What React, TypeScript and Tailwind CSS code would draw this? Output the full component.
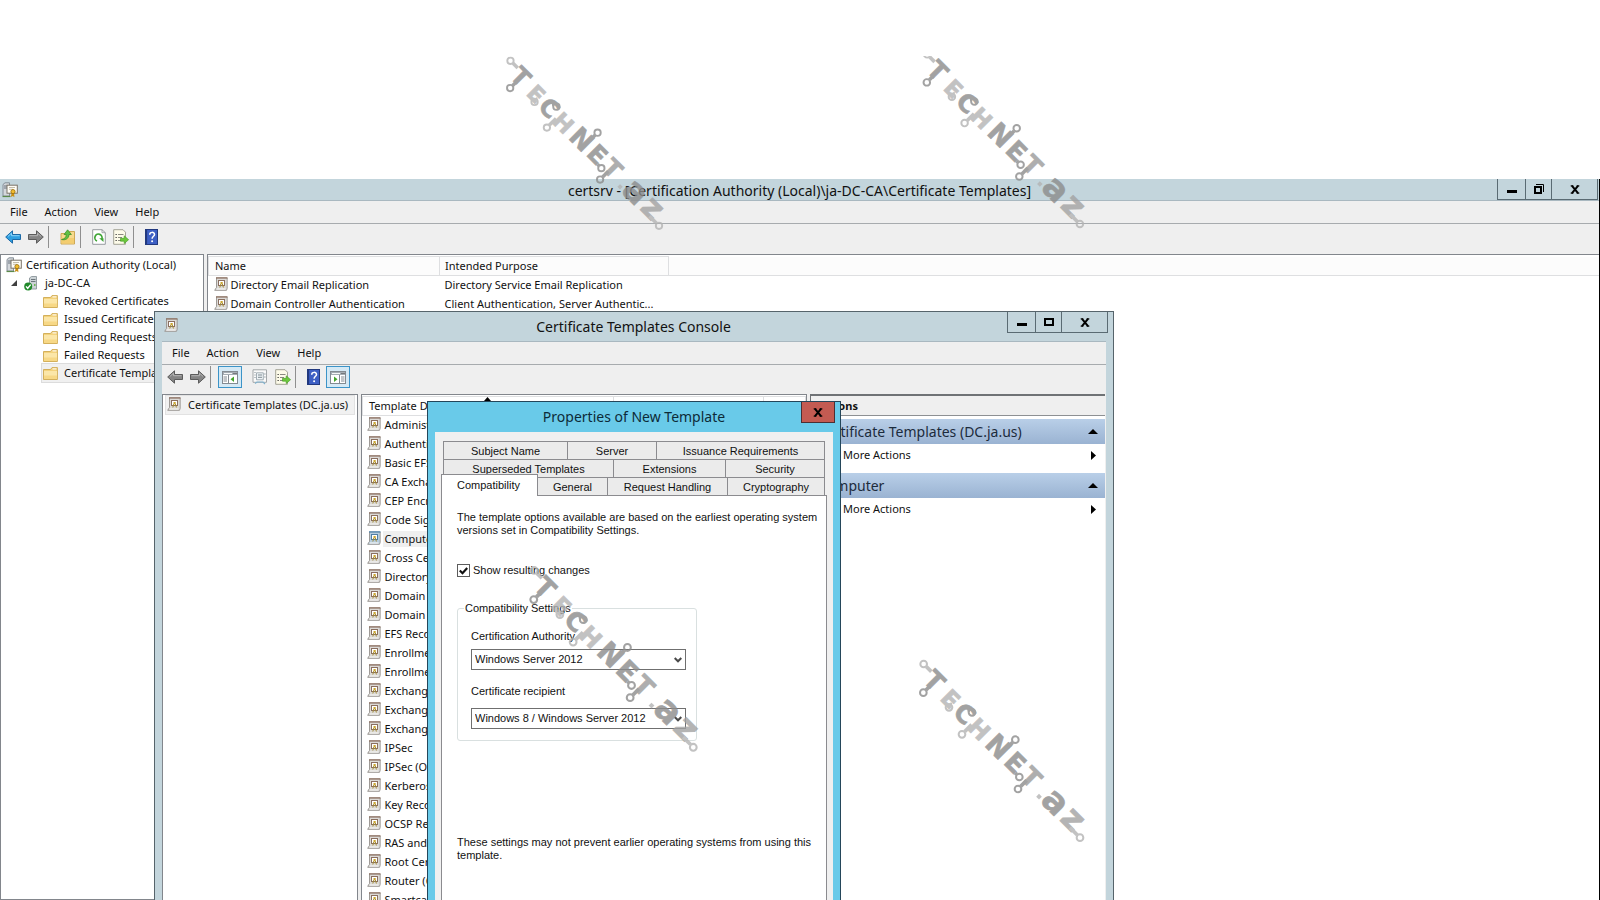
import type { ReactNode } from "react";

const outerRows = [
  ["Directory Email Replication", "Directory Service Email Replication"],
  ["Domain Controller Authentication", "Client Authentication, Server Authentic..."],
];

const folders = [
  "Revoked Certificates",
  "Issued Certificates",
  "Pending Requests",
  "Failed Requests",
  "Certificate Templates",
];

const templates = [
  "Administrator",
  "Authenticated Session",
  "Basic EFS",
  "CA Exchange",
  "CEP Encryption",
  "Code Signing",
  "Computer",
  "Cross Certification Authority",
  "Directory Email Replication",
  "Domain Controller",
  "Domain Controller Authentication",
  "EFS Recovery Agent",
  "Enrollment Agent",
  "Enrollment Agent (Computer)",
  "Exchange Enrollment Agent",
  "Exchange Signature Only",
  "Exchange User",
  "IPSec",
  "IPSec (Offline request)",
  "Kerberos Authentication",
  "Key Recovery Agent",
  "OCSP Response Signing",
  "RAS and IAS Server",
  "Root Certification Authority",
  "Router (Offline request)",
  "Smartcard Logon",
];

/* ---------- icons ---------- */

function CertIcon({ selected = false }: { selected?: boolean }) {
  const frame = selected ? "#4f7fa6" : "#8a6f60";
  return (
    <svg className="mb-[2px] h-[14px] w-[14px] shrink-0" viewBox="0 0 14 14" aria-hidden="true">
      <path d="M2 1h11v10.500l-.5 2H.5L2 10.500z" fill={selected ? "#b5cde0" : "#dcdad7"} />
      <path d="M2.500 1v9.500L.7 13.300h11.800l.700-2V1" fill="none" stroke="#96938f" strokeWidth="0.900" />
      <path d="M2 .900h11.500" stroke={frame} strokeWidth="1.400" />
      <rect x="4.500" y="3.500" width="6" height="5" fill="#fff" stroke={frame} strokeWidth="1" />
      <rect x="6.500" y="5" width="2.200" height="2.200" fill="#c9a52e" />
      <path d="M6.800 7l-1 3.500M8.400 7l1 3.500" stroke="#a28a35" strokeWidth="1" />
      <path d="M2.500 12h9" stroke="#f4f3f1" strokeWidth="1.200" />
    </svg>
  );
}

function AuthorityIcon() {
  return (
    <svg className="h-4 w-4 shrink-0" viewBox="0 0 16 16" aria-hidden="true">
      <path d="M1 2.500L3 .8h4.500V14H1z" fill="#d4d8dc" stroke="#7d8790" strokeWidth="0.900" />
      <path d="M2 4h4M2 6h3" stroke="#5f6a74" strokeWidth="0.900" />
      <path d="M.5 14.500h8" stroke="#5b8a4a" strokeWidth="1.200" />
      <rect x="5" y="3.200" width="10.300" height="8" fill="#fffdf6" stroke="#7b7468" strokeWidth="1" />
      <path d="M7 5.500h6M7 7.300h4" stroke="#b5ad9a" strokeWidth="0.800" />
      <path d="M9.800 10.500l-1 4.500 2-1 1.600 1.300-.4-4.800z" fill="#c98f12" />
      <circle cx="11" cy="9.600" r="2.100" fill="#f0bc2f" stroke="#9a6f0c" strokeWidth="0.800" />
    </svg>
  );
}

function ServerOkIcon() {
  return (
    <svg className="h-[15px] w-[14px] shrink-0" viewBox="0 0 14 15" aria-hidden="true">
      <path d="M5.500 2L7.500.5h5V13h-7z" fill="#ccd3d6" stroke="#8b959b" strokeWidth="0.900" />
      <path d="M7 3.500h4.500M7 5.500h4.500" stroke="#6c767c" strokeWidth="1" />
      <rect x="10" y="8" width="1.500" height="2" fill="#6fb45a" />
      <circle cx="4.200" cy="10.500" r="4" fill="#218a2b" />
      <path d="M2 10.400l1.700 1.900 3-3.700" fill="none" stroke="#fff" strokeWidth="1.400" />
    </svg>
  );
}

function FolderIcon() {
  return (
    <svg className="h-[13px] w-[15px] shrink-0" viewBox="0 0 15 13" aria-hidden="true">
      <path d="M.5 2.500h7L9 .6h5.400v11.900H.5z" fill="#f3d27c" stroke="#cfa950" strokeWidth="0.900" />
      <path d="M9.500 1.900h4" stroke="#fff" strokeWidth="1" />
      <path d="M1 4h13v8H1z" fill="#fbe6a8" />
      <path d="M1 8.500h13V12H1z" fill="#f7d886" />
    </svg>
  );
}

function ArrowIcon({ blue = false, back = false }: { blue?: boolean; back?: boolean }) {
  return (
    <svg className="h-[14px] w-4" viewBox="0 0 16 14" aria-hidden="true">
      <path
        d={back ? "M.7 7L7.500.8v3.700h8v5h-8v3.700z" : "M15.300 7L8.500.8v3.700h-8v5h8v3.700z"}
        fill={blue ? "#2f9fe0" : "#858585"}
        stroke={blue ? "#1c69a6" : "#5c5c5c"}
        strokeWidth="1"
      />
      <path
        d={back ? "M3 6.400l3.500-3.200v2.500h8" : "M1.500 5.700h8V3.200L13 6.400"}
        fill="none"
        stroke={blue ? "#8bd3f8" : "#b5b5b5"}
        strokeWidth="1"
      />
    </svg>
  );
}

function UpFolderIcon() {
  return (
    <svg className="h-4 w-4" viewBox="0 0 16 16" aria-hidden="true">
      <path d="M1 4.500h7l1.500-2h5V15H1z" fill="#f7da8d" stroke="#c9a24a" strokeWidth="0.900" />
      <path d="M1.500 9H14v5.500H1.500z" fill="#f3cd70" />
      <path d="M1.500 10.500c3.500-.5 4.700-2.500 4.700-5H4L7.600.8l3.800 4.700H9c0 4-3.500 6-7.500 5z" fill="#5fc043" stroke="#348a22" strokeWidth="0.700" />
    </svg>
  );
}

function RefreshIcon() {
  return (
    <svg className="h-4 w-[14px]" viewBox="0 0 14 16" aria-hidden="true">
      <path d="M.7.7H10l3.300 3v11.600H.7z" fill="#fff" stroke="#8d9296" strokeWidth="0.900" />
      <path d="M10 .7v3h3.300" fill="none" stroke="#8d9296" strokeWidth="0.800" />
      <path d="M5 12A3.600 3.600 0 1 1 9.800 10" fill="none" stroke="#3fa535" strokeWidth="1.700" />
      <path d="M7.200 9.300h4.300V13z" fill="#3fa535" />
    </svg>
  );
}

function ExportIcon() {
  return (
    <svg className="h-4 w-4" viewBox="0 0 16 16" aria-hidden="true">
      <path d="M.7.7H10l2.500 2.500v12.100H.7z" fill="#fdfbe9" stroke="#9a9a8c" strokeWidth="0.900" />
      <path d="M2.500 5.500h1.300M2.500 8.500h1.300M2.500 11.500h1.300" stroke="#444" strokeWidth="1.200" />
      <path d="M5 5.500h5.500M5 8.500h4M5 11.500h3.500" stroke="#8a8a80" strokeWidth="1" />
      <path d="M7.500 9.300h3.700V6.800l4.400 3.900-4.400 3.900v-2.400H7.500z" fill="#6cc83d" stroke="#3f9a1f" strokeWidth="0.600" />
    </svg>
  );
}

function HelpIcon() {
  return (
    <svg className="h-4 w-[13px]" viewBox="0 0 13 16" aria-hidden="true">
      <rect x="0.500" y="0.500" width="12" height="15" fill="#3d5fc4" stroke="#22397f" strokeWidth="1" />
      <path d="M1.500 1v14" stroke="#22397f" strokeWidth="1.200" />
      <path d="M4.700 5.700C4.700 2.600 9.500 2.700 9.500 5.400c0 1.900-2.400 2-2.400 4.400" fill="none" stroke="#fff" strokeWidth="1.500" />
      <circle cx="7.100" cy="12.200" r="1" fill="#fff" />
    </svg>
  );
}

function PropertiesIcon() {
  return (
    <svg className="h-4 w-4" viewBox="0 0 16 16" aria-hidden="true">
      <path d="M1 .8h13.500v12.500H1z" fill="#fafafa" stroke="#9b9fa2" strokeWidth="0.900" />
      <path d="M4.500 3.800h6.800v7H4.500z" fill="#eef3f6" stroke="#9aa6ad" strokeWidth="0.900" />
      <path d="M2.500 3.500h1M2.500 6h1M2.500 8.500h1M6 6h4M6 8.300h4M12.300 5h1.200M12.300 8h1.200" stroke="#7d8a92" strokeWidth="1" />
      <path d="M3 14.500L5 13h6l2 2" fill="none" stroke="#7fb2cf" strokeWidth="1.100" />
    </svg>
  );
}

function PaneIcon({ right = false }: { right?: boolean }) {
  return (
    <svg className="h-[13px] w-4" viewBox="0 0 16 13" aria-hidden="true">
      <rect x="0.500" y="0.500" width="15" height="12" fill="#fff" stroke="#838b92" strokeWidth="1" />
      <path d="M1 1h14v3H1z" fill="#a5adb4" />
      <path d="M2 2.500h8" stroke="#fff" strokeWidth="0.900" />
      <path d="M11.500 2.500h1M13.500 2.500h1" stroke="#444" strokeWidth="1" />
      {right ? (
        <>
          <path d="M9.500 4v8.500" stroke="#838b92" strokeWidth="1" />
          <path d="M11 6h3.500M11 8h3.500M11 10h3.500" stroke="#838b92" strokeWidth="1" />
          <path d="M4 5.500l3.500 2.800L4 11z" fill="#43a52c" />
        </>
      ) : (
        <>
          <path d="M6.500 4v8.500" stroke="#838b92" strokeWidth="1" />
          <path d="M1.500 6H5M1.500 8H5M1.500 10H5" stroke="#838b92" strokeWidth="1" />
          <path d="M12 5.500L8.500 8.300 12 11z" fill="#43a52c" />
        </>
      )}
    </svg>
  );
}

function CloseGlyph() {
  return (
    <svg className="h-[9px] w-[10px]" viewBox="0 0 10 9" aria-hidden="true">
      <path d="M2 .8l6 7.400M8 .8L2 8.200" stroke="#000" strokeWidth="2" />
      <path d="M.7.800h2.600M6.700.800h2.600M.7 8.200h2.600M6.700 8.200h2.600" stroke="#000" strokeWidth="1.300" />
    </svg>
  );
}

function MinimizeGlyph() {
  return (
    <svg className="h-[9px] w-[10px]" viewBox="0 0 10 9" aria-hidden="true">
      <rect y="5" width="10" height="3" />
    </svg>
  );
}

function MaximizeGlyph({ restore = false }: { restore?: boolean }) {
  return (
    <svg className="h-[10px] w-[10px]" viewBox="0 0 10 10" aria-hidden="true">
      {restore ? (
        <>
          <rect x="1" y="3" width="6" height="6" fill="none" stroke="#000" strokeWidth="2" />
          <path d="M2 .5h7.500V8" fill="none" stroke="#000" strokeWidth="1" />
        </>
      ) : (
        <rect x="1" y="2" width="8" height="6" fill="none" stroke="#000" strokeWidth="2" />
      )}
    </svg>
  );
}

/* ---------- shared window parts ---------- */

function WindowButtons({ restore = false }: { restore?: boolean }) {
  const base = "flex items-center justify-center border-r border-[#5a6b73]";
  return (
    <div className="flex h-[21px] border-b border-l border-[#5a6b73]">
      <button type="button" aria-label="Minimize" className={`${base} w-7`}>
        <MinimizeGlyph />
      </button>
      <button type="button" aria-label={restore ? "Restore" : "Maximize"} className={`${base} w-[26px]`}>
        <MaximizeGlyph restore={restore} />
      </button>
      <button type="button" aria-label="Close" className={`${base} w-[46px]`}>
        <CloseGlyph />
      </button>
    </div>
  );
}

function MenuBar() {
  return (
    <nav className="flex h-[23px] shrink-0 items-center gap-[17px] border-b border-[#a7abae] bg-[#efefef] px-[10px]">
      {["File", "Action", "View", "Help"].map((item) => (
        <button type="button" key={item}>
          {item}
        </button>
      ))}
    </nav>
  );
}

function ToolButton({ label, children, active = false }: { label: string; children: ReactNode; active?: boolean }) {
  return (
    <button
      type="button"
      aria-label={label}
      className={
        active
          ? "flex h-[22px] w-6 items-center justify-center border border-[#3c94c8] bg-[#d5e9f5]"
          : "flex h-[22px] items-center justify-center"
      }
    >
      {children}
    </button>
  );
}

function Divider() {
  return <span className="h-[22px] w-px bg-[#8f8f8f]" />;
}

/* ---------- watermark ---------- */

const marks: [string, number, number, number, string][] = [
  ["T", 104, 122, 76, "#8c8c8c"],
  ["E", 152, 177, 70, "#b4b4b4"],
  ["C", 194, 221, 76, "#8c8c8c"],
  ["H", 238, 268, 72, "#b4b4b4"],
  ["N", 296, 319, 82, "#8c8c8c"],
  ["E", 346, 368, 78, "#8c8c8c"],
  ["T", 394, 412, 76, "#9a9a9a"],
  ["a", 463, 489, 104, "#8c8c8c"],
  ["z", 517, 540, 100, "#a2a2a2"],
];

const nodes: [number, number, number, number, string][] = [
  [71, 72, 94, 95, "#b4b4b4"],
  [70, 158, 90, 138, "#8c8c8c"],
  [147, 202, 150, 192, "#b4b4b4"],
  [216, 217, 202, 210, "#8c8c8c"],
  [186, 283, 215, 254, "#b4b4b4"],
  [346, 299, 322, 323, "#8c8c8c"],
  [358, 411, 346, 399, "#8c8c8c"],
  [354, 447, 380, 421, "#8c8c8c"],
  [540, 593, 510, 563, "#b4b4b4"],
];

function Watermark({ place, viewBox = "0 0 660 660" }: { place: string; viewBox?: string }) {
  return (
    <svg className={`pointer-events-none absolute opacity-80 ${place}`} viewBox={viewBox} aria-hidden="true">
      {marks.map(([ch, x, y, size, fill]) => (
        <text
          key={`${ch}${x}`}
          transform={`translate(${x} ${y}) rotate(45)`}
          y={ch === "a" || ch === "z" ? size * 0.28 : size * 0.36}
          textAnchor="middle"
          fontSize={size}
          fill={fill}
          stroke={fill}
          strokeWidth="2"
          className="font-['DejaVu_Sans',sans-serif] font-bold"
        >
          {ch}
        </text>
      ))}
      <rect x="411" y="464" width="12" height="12" transform="rotate(45 417 470)" fill="#b4b4b4" />
      {nodes.map(([x, y, tx, ty, stroke]) => (
        <g key={`${x}-${y}`} stroke={stroke} fill="none">
          <path d={`M${x + Math.sign(tx - x) * 8} ${y + Math.sign(ty - y) * 8}L${tx} ${ty}`} strokeWidth="11" />
          <circle cx={x} cy={y} r="10" strokeWidth="6" />
        </g>
      ))}
    </svg>
  );
}

/* ---------- windows ---------- */

function CertAuthorityWindow() {
  return (
    <main className="flex min-h-0 flex-1 flex-col border-r border-black bg-[#efefef]">
      <header className="flex h-[22px] shrink-0 items-start border-b border-[#a9b8c0] bg-[#c3d5dc] pl-[2px] pr-px">
        <div className="flex h-[22px] w-[100px] items-center">
          <AuthorityIcon />
        </div>
        <h1 className="flex-1 truncate text-center text-[14px] leading-6">
          certsrv - [Certification Authority (Local)\ja-DC-CA\Certificate Templates]
        </h1>
        <WindowButtons restore />
      </header>
      <MenuBar />
      <div className="flex h-[30px] shrink-0 items-start gap-1 pl-[5px] pt-[2px]">
        <div className="flex gap-[7px]">
          <ToolButton label="Back"><ArrowIcon blue back /></ToolButton>
          <ToolButton label="Forward"><ArrowIcon /></ToolButton>
        </div>
        <Divider />
        <div className="flex pl-[7px]"><ToolButton label="Up one level"><UpFolderIcon /></ToolButton></div>
        <Divider />
        <div className="flex gap-[7px] pl-[7px]">
          <ToolButton label="Refresh"><RefreshIcon /></ToolButton>
          <ToolButton label="Export list"><ExportIcon /></ToolButton>
        </div>
        <Divider />
        <div className="flex pl-[7px]"><ToolButton label="Help"><HelpIcon /></ToolButton></div>
      </div>
      <div className="flex min-h-0 flex-1 gap-[3px]">
        <section className="w-[204px] shrink-0 overflow-hidden border border-[#82868c] bg-white pt-px">
          <div className="flex h-[18px] items-center gap-1 whitespace-nowrap pl-[5px]">
            <AuthorityIcon />
            Certification Authority (Local)
          </div>
          <div className="flex h-[18px] items-center whitespace-nowrap pl-[10px]">
            <svg className="mr-[7px] h-[6px] w-[6px]" viewBox="0 0 6 6" aria-hidden="true">
              <path d="M6 0v6H0z" fill="#404040" />
            </svg>
            <ServerOkIcon />
            <span className="pl-[7px]">ja-DC-CA</span>
          </div>
          <ul className="pl-[41px]">
            {folders.map((f, i) => (
              <li
                key={f}
                className={
                  i === folders.length - 1
                    ? "flex h-[18px] items-center gap-[6px] whitespace-nowrap bg-[#f0f0f0] pl-px outline outline-[#dcdcdc]"
                    : "flex h-[18px] items-center gap-[6px] whitespace-nowrap pl-px"
                }
              >
                <FolderIcon />
                {f}
              </li>
            ))}
          </ul>
        </section>
        <section className="flex-1 border-l border-t border-[#82868c] bg-white pt-px">
          <table className="w-full table-fixed border-collapse text-left">
            <colgroup>
              <col className="w-[231px]" />
              <col className="w-[229px]" />
              <col />
            </colgroup>
            <thead className="bg-[#fcfcfc]">
              <tr className="h-[19px]">
                <th className="border border-[#dedfe1] py-0 pl-[6px] font-normal">Name</th>
                <th className="border border-[#dedfe1] py-0 pl-[5px] font-normal">Intended Purpose</th>
                <th className="border-b border-[#dedfe1] p-0" aria-label="Empty" />
              </tr>
            </thead>
            <tbody>
              {outerRows.map(([name, purpose]) => (
                <tr key={name} className="h-[19px]">
                  <td className="py-0 pl-[5px]">
                    <span className="flex items-center gap-[3px] whitespace-nowrap"><CertIcon />{name}</span>
                  </td>
                  <td className="whitespace-nowrap py-0 pl-[5px]">{purpose}</td>
                  <td />
                </tr>
              ))}
            </tbody>
          </table>
        </section>
      </div>
    </main>
  );
}

function ActionGroup({ title }: { title: string }) {
  return (
    <div className="pb-[11px]">
      <div className="flex h-[25px] items-center justify-between bg-linear-to-b from-[#b9cfe8] to-[#9ab3d2] pl-[7px] pr-[7px] text-[14px] text-[#1c2b3c]">
        {title}
        <svg className="h-[5px] w-[10px]" viewBox="0 0 10 5" aria-hidden="true">
          <path d="M0 5l5-5 5 5z" fill="#000" />
        </svg>
      </div>
      <button type="button" className="flex h-[18px] w-full items-center justify-between pl-8 pr-[9px] pt-1">
        More Actions
        <svg className="h-[9px] w-[5px]" viewBox="0 0 5 9" aria-hidden="true">
          <path d="M0 0l5 4.500L0 9z" fill="#000" />
        </svg>
      </button>
    </div>
  );
}

function TemplatesConsole() {
  return (
    <section className="absolute -bottom-px left-[154px] top-[311px] flex w-[960px] flex-col border border-[#56646b] bg-[#c3d5dc]">
      <header className="flex h-[29px] shrink-0 items-start pl-[9px] pr-[5px]">
        <div className="flex h-[28px] w-24 items-center"><CertIcon /></div>
        <h2 className="flex-1 text-center text-[14px] leading-[30px]">Certificate Templates Console</h2>
        <WindowButtons />
      </header>
      <div className="mx-[7px] flex min-h-0 flex-1 flex-col border-t border-[#a9b8c0] bg-[#efefef]">
        <MenuBar />
        <div className="flex h-[29px] shrink-0 items-start gap-1 pl-[5px] pt-px">
          <div className="flex gap-[7px]">
            <ToolButton label="Back"><ArrowIcon back /></ToolButton>
            <ToolButton label="Forward"><ArrowIcon /></ToolButton>
          </div>
          <Divider />
          <div className="flex pl-[3px]">
            <ToolButton label="Show console tree" active><PaneIcon /></ToolButton>
          </div>
          <div className="flex gap-[7px] pl-[6px]">
            <ToolButton label="Properties"><PropertiesIcon /></ToolButton>
            <ToolButton label="Export list"><ExportIcon /></ToolButton>
          </div>
          <Divider />
          <div className="flex gap-[6px] pl-[7px]">
            <ToolButton label="Help"><HelpIcon /></ToolButton>
            <ToolButton label="Show action pane" active><PaneIcon right /></ToolButton>
          </div>
        </div>
        <div className="flex min-h-0 flex-1 gap-[3px]">
          <div className="w-[196px] shrink-0 border border-b-0 border-[#82868c] bg-white px-[3px] pt-px">
            <div className="flex h-[18px] items-center gap-[7px] whitespace-nowrap bg-[#f1f1f1] pl-px outline outline-[#e2e2e2]">
              <CertIcon />
              Certificate Templates (DC.ja.us)
            </div>
          </div>
          <div className="w-[446px] shrink-0 overflow-hidden border border-b-0 border-[#82868c] bg-white pt-px">
            <table className="w-full table-fixed border-collapse text-left">
              <colgroup>
                <col className="w-[251px]" />
                <col className="w-[150px]" />
                <col />
              </colgroup>
              <thead>
                <tr className="h-[19px]">
                  <th className="relative border border-[#dedfe1] py-0 pl-[6px] font-normal">
                    Template Display Name
                    <svg className="absolute left-[121px] top-0 h-1 w-[7px]" viewBox="0 0 7 4" aria-hidden="true">
                      <path d="M0 4l3.500-4L7 4z" />
                    </svg>
                  </th>
                  <th className="border border-[#dedfe1]" aria-label="Schema version" />
                  <th className="border border-[#dedfe1]" aria-label="Version" />
                </tr>
              </thead>
              <tbody>
                {templates.map((t) => (
                  <tr key={t} className="h-[19px]">
                    <td className="py-0 pl-[4px]">
                      <span className="flex items-center whitespace-nowrap">
                        <CertIcon selected={t === "Computer"} />
                        <span className={t === "Computer" ? "ml-[2px] flex-1 bg-[#efefef] pl-[2px]" : "pl-1"}>{t}</span>
                      </span>
                    </td>
                    <td />
                    <td />
                  </tr>
                ))}
              </tbody>
            </table>
          </div>
          <aside className="mr-px flex-1 border-l border-t-2 border-[#6f7275] bg-white">
            <h3 className="mb-[3px] h-[20px] border-b border-[#8d9093] bg-[#efefef] pl-[6px] text-[11px] font-bold leading-[20px]">Actions</h3>
            <ActionGroup title="Certificate Templates (DC.ja.us)" />
            <ActionGroup title="Computer" />
          </aside>
        </div>
      </div>
    </section>
  );
}

function Tab({ label, size }: { label: string; size: string }) {
  return (
    <button type="button" role="tab" className={`h-[18px] border border-b-0 border-r-0 border-[#8b8b8f] bg-[#ebebeb] ${size}`}>
      {label}
    </button>
  );
}

function Combo({ id, label, value, gap }: { id: string; label: string; value: string; gap: string }) {
  return (
    <div className={`flex w-[215px] flex-col ${gap}`}>
      <label htmlFor={id} className="leading-[13px]">{label}</label>
      <div className="relative">
        <select id={id} defaultValue={value} className="block h-[21px] w-full appearance-none rounded-none border border-[#6f6f6f] bg-white pl-[3px] leading-[19px]">
          <option>{value}</option>
        </select>
        <svg className="pointer-events-none absolute right-[4px] top-[8px] h-[6px] w-2" viewBox="0 0 8 6" aria-hidden="true">
          <path d="M.7 1L4 4.300 7.300 1" fill="none" stroke="#4a4a4a" strokeWidth="2" />
        </svg>
      </div>
    </div>
  );
}

function PropertiesDialog() {
  return (
    <section
      role="dialog"
      aria-label="Properties of New Template"
      className="absolute -bottom-px left-[427px] top-[401px] flex w-[414px] flex-col border border-[#24465a] bg-[#69cae9] px-[7px] font-['Liberation_Sans',Arial,sans-serif] text-[11px]"
    >
      <header className="flex h-[30px] shrink-0 items-start justify-center">
        <h2 className="font-['Noto_Sans',sans-serif] text-[14px] leading-[30px] text-[#0d2b38]">Properties of New Template</h2>
        <button type="button" aria-label="Close" className="absolute right-[5px] top-0 flex h-[21px] w-[34px] items-center justify-center border border-t-0 border-[#4c2f33] bg-[#c35b52]">
          <CloseGlyph />
        </button>
      </header>
      <div className="flex min-h-0 flex-1 flex-col bg-[#f0f0f0] px-[6px] pt-[9px]">
        <div role="tablist" className="relative px-[2px]">
          <div className="flex border-r border-[#8b8b8f]">
            <Tab label="Subject Name" size="w-[124px]" />
            <Tab label="Server" size="w-[89px]" />
            <Tab label="Issuance Requirements" size="flex-1" />
          </div>
          <div className="flex border-r border-[#8b8b8f]">
            <Tab label="Superseded Templates" size="w-[170px]" />
            <Tab label="Extensions" size="w-[112px]" />
            <Tab label="Security" size="flex-1" />
          </div>
          <div className="flex border-r border-[#8b8b8f] pl-[94px]">
            <Tab label="General" size="w-[70px]" />
            <Tab label="Request Handling" size="w-[120px]" />
            <Tab label="Cryptography" size="flex-1" />
          </div>
          <button
            type="button"
            role="tab"
            aria-selected="true"
            className="absolute -bottom-px left-0 h-[22px] w-[97px] border border-b-0 border-[#8b8b8f] bg-white pb-[2px] pr-[2px]"
          >
            Compatibility
          </button>
        </div>
        <div role="tabpanel" className="flex-1 border border-b-0 border-[#8b8b8f] bg-white px-[15px] pt-[15px]">
          <p className="whitespace-nowrap leading-[13px]">
            The template options available are based on the earliest operating system
            <br />
            versions set in Compatibility Settings.
          </p>
          <label className="mt-[27px] flex items-center gap-[3px] leading-[13px]">
            <span className="relative flex">
              <input type="checkbox" defaultChecked className="size-[13px] appearance-none border border-[#5c5c5c] bg-white" />
              <svg className="pointer-events-none absolute left-[2px] top-[3px] h-[8px] w-[9px]" viewBox="0 0 9 8" aria-hidden="true">
                <path d="M.8 3.500l2.700 2.700L8.200 1" fill="none" stroke="#111" strokeWidth="2.200" />
              </svg>
            </span>
            Show resulting changes
          </label>
          <fieldset className="mt-[25px] h-[139px] w-[240px] rounded-[3px] border border-[#d9e0e0] pl-[13px]">
            <legend className="-ml-[7px] px-px leading-[13px]">Compatibility Settings</legend>
            <div className="flex flex-col gap-[15px] pt-[15px]">
              <Combo id="ca" label="Certification Authority" value="Windows Server 2012" gap="gap-[6px]" />
              <Combo id="recipient" label="Certificate recipient" value="Windows 8 / Windows Server 2012" gap="gap-[10px]" />
            </div>
          </fieldset>
          <p className="mt-[95px] whitespace-nowrap leading-[13px]">
            These settings may not prevent earlier operating systems from using this
            <br />
            template.
          </p>
        </div>
      </div>
    </section>
  );
}

export default function App() {
  return (
    <div className="relative flex h-screen flex-col overflow-hidden bg-white pt-[179px] font-['Noto_Sans',sans-serif] text-[11px] leading-[16px] text-[#111]">
      <CertAuthorityWindow />
      <TemplatesConsole />
      <PropertiesDialog />
      <Watermark place="left-[488px] top-[38px] w-[209px]" />
      <Watermark place="left-[904px] top-[56px] w-[215px]" viewBox="0 77 660 583" />
      <Watermark place="left-[510px] top-[546px] w-[224px]" />
      <Watermark place="left-[900px] top-[640px] w-[220px]" />
    </div>
  );
}
